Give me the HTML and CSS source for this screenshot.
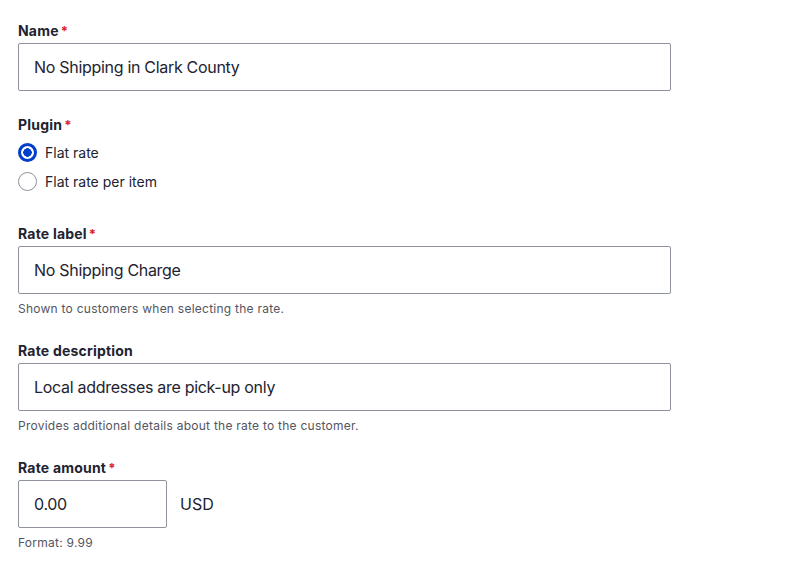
FILE: index.html
```html
<!DOCTYPE html>
<html lang="en">
<head>
    <meta charset="UTF-8">
    <meta name="viewport" content="width=device-width, initial-scale=1.0">
    <title>Shipping method</title>
    <link rel="stylesheet" href="styles.css">
</head>
<body>
    <form class="shipping-form">
        <div class="form-item">
            <label class="form-label required" for="name">Name</label>
            <input class="form-text" type="text" id="name" value="No Shipping in Clark County">
        </div>

        <div class="form-item form-radios">
            <div class="form-label required">Plugin</div>
            <label class="radio">
                <input type="radio" name="plugin" checked>
                <span>Flat rate</span>
            </label>
            <label class="radio">
                <input type="radio" name="plugin">
                <span>Flat rate per item</span>
            </label>
        </div>

        <div class="form-item">
            <label class="form-label required" for="rate-label">Rate label</label>
            <input class="form-text" type="text" id="rate-label" value="No Shipping Charge">
            <div class="description">Shown to customers when selecting the rate.</div>
        </div>

        <div class="form-item">
            <label class="form-label" for="rate-description">Rate description</label>
            <input class="form-text" type="text" id="rate-description" value="Local addresses are pick-up only">
            <div class="description">Provides additional details about the rate to the customer.</div>
        </div>

        <div class="form-item">
            <label class="form-label required" for="rate-amount">Rate amount</label>
            <div class="price">
                <input class="form-text form-number" type="text" id="rate-amount" value="0.00">
                <span class="currency">USD</span>
            </div>
            <div class="description">Format: 9.99</div>
        </div>
    </form>
</body>
</html>
```

FILE: styles.css
```css
body, html {
    margin: 0;
    padding: 0;
    background: #ffffff;
    color: #222330;
    font-family: Inter, "Noto Sans", Arial, sans-serif;
}

.shipping-form {
    padding: 22px 18px 0;
}

.form-item {
    margin-bottom: 25px;
}

.form-item:last-child {
    margin-bottom: 0;
}

.form-label {
    display: block;
    font-size: 14px;
    font-weight: 700;
    line-height: 18px;
    letter-spacing: 0.2px;
    margin-bottom: 3px;
}

.form-label.required::after {
    content: "*";
    color: #dc2323;
    margin-left: 2px;
    font-size: 13px;
    vertical-align: top;
}

.form-text {
    display: block;
    box-sizing: border-box;
    width: 653px;
    height: 48px;
    margin: 0;
    padding: 0 15px;
    border: 1px solid #8e929c;
    border-radius: 2px;
    font-family: inherit;
    font-size: 16px;
    letter-spacing: -0.3px;
    color: #222330;
    background: #ffffff;
}

.description {
    margin-top: 7px;
    font-size: 12px;
    line-height: 16px;
    letter-spacing: 0.25px;
    color: #545560;
}

/* radios */
.form-radios .form-label {
    margin-bottom: 4px;
}

.radio {
    display: flex;
    align-items: center;
    gap: 8px;
    height: 29px;
    font-size: 14px;
}

.radio input {
    appearance: none;
    -webkit-appearance: none;
    box-sizing: border-box;
    width: 19px;
    height: 19px;
    margin: 0;
    border: 1px solid #8e929c;
    border-radius: 50%;
    background: #ffffff;
}

.radio input:checked {
    border: 3px solid #003ecc;
    background: radial-gradient(circle, #003ecc 0 4px, #ffffff 4.5px);
}

.form-radios {
    margin-bottom: 29px;
}

/* price field */
.price {
    display: flex;
    align-items: center;
    gap: 13px;
}

.form-number {
    width: 149px;
}

.currency {
    font-size: 16px;
}
```
